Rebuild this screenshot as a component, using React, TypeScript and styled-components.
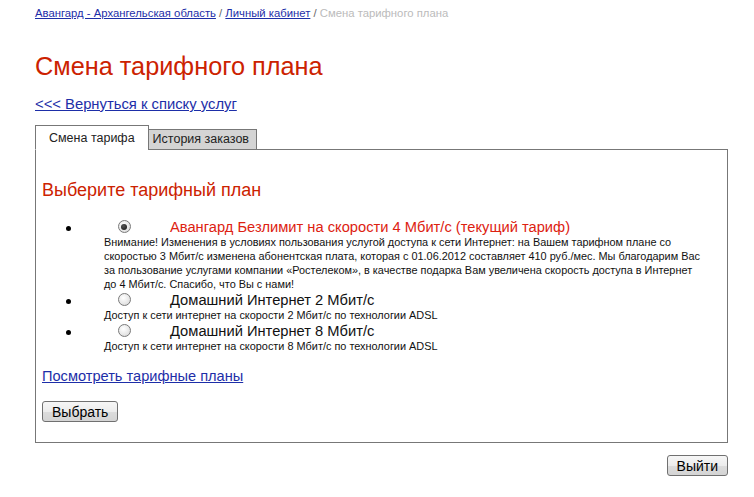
import React, { useState } from "react";
import styled, { createGlobalStyle } from "styled-components";

const GlobalStyle = createGlobalStyle`
  html, body {
    margin: 0;
    padding: 0;
    background: #ffffff;
  }
  body {
    font-family: "Liberation Sans", Arial, sans-serif;
    color: #000;
  }
`;

const Page = styled.div`
  padding: 6px 26px 0 35px;
`;

const Breadcrumbs = styled.div`
  font-size: 11.3px;
  line-height: 14px;
  color: #bbbbbb;
`;

const CrumbLink = styled.a`
  color: #1d2ea8;
  text-decoration: underline;
`;

const Sep = styled.span`
  color: #666;
`;

const Title = styled.h1`
  margin: 31px 0 0;
  font-size: 25.3px;
  line-height: 30px;
  font-weight: normal;
  color: #cc2200;
`;

const BackLink = styled.a`
  display: inline-block;
  margin-top: 15px;
  font-size: 14.8px;
  line-height: 17px;
  color: #1d2ea8;
  text-decoration: underline;
`;

const TabBar = styled.div`
  display: flex;
  align-items: flex-end;
  margin-top: 12px;
  position: relative;
  z-index: 1;
`;

const Tab = styled.div<{ active?: boolean }>`
  box-sizing: border-box;
  font-size: 12.5px;
  border: 1px solid #777;
  border-bottom: ${(p) => (p.active ? "1px solid #fff" : "1px solid #777")};
  background: ${(p) => (p.active ? "#fff" : "#d4d4d4")};
  height: ${(p) => (p.active ? "25px" : "21px")};
  line-height: ${(p) => (p.active ? "25px" : "19px")};
  padding: ${(p) => (p.active ? "0 13px" : "0 7px 0 4px")};
  margin-left: ${(p) => (p.active ? "0" : "-1px")};
  color: #222;
  cursor: pointer;
`;

const Panel = styled.div`
  border: 1px solid #777;
  margin-top: -1px;
  padding: 0 6px;
  height: 294px;
  box-sizing: border-box;
`;

const PanelTitle = styled.h2`
  margin: 29px 0 0;
  font-size: 18px;
  line-height: 22px;
  font-weight: normal;
  color: #cc2200;
`;

const PlanList = styled.ul`
  margin: 17px 0 0;
  padding-left: 40px;
`;

const PlanItem = styled.li`
  list-style: disc;
`;

const PlanRow = styled.label`
  display: flex;
  align-items: center;
  height: 17px;
  cursor: pointer;
`;

const RadioCell = styled.span`
  width: 84px;
  display: flex;
  justify-content: center;
`;

const Radio = styled.input`
  appearance: none;
  margin: 0;
  width: 13px;
  height: 13px;
  border-radius: 50%;
  border: 1px solid #7a7a7a;
  background: radial-gradient(circle at 40% 35%, #ffffff 0%, #e6e6e6 60%, #cfcfcf 100%);
  box-sizing: border-box;
  position: relative;
  cursor: pointer;
  &:checked::after {
    content: "";
    position: absolute;
    left: 2.5px;
    top: 2.5px;
    width: 6px;
    height: 6px;
    border-radius: 50%;
    background: radial-gradient(circle at 40% 35%, #555 0%, #111 100%);
  }
`;

const PlanName = styled.span<{ current?: boolean }>`
  font-size: 14.7px;
  color: ${(p) => (p.current ? "#dd2211" : "#111")};
  white-space: nowrap;
  margin-left: 4px;
`;

const PlanDesc = styled.div`
  margin-left: 22px;
  font-size: 10.9px;
  line-height: 14px;
  color: #111;
  padding-right: 15.5px;
`;

const PlansLink = styled.a`
  display: inline-block;
  margin-top: 15px;
  font-size: 14.6px;
  line-height: 17px;
  color: #1d2ea8;
  text-decoration: underline;
`;

const Button = styled.button`
  font-family: "Liberation Sans", Arial, sans-serif;
  font-size: 14px;
  height: 21px;
  padding: 0 9px;
  color: #000;
  border: 1px solid #707070;
  border-radius: 3px;
  background: linear-gradient(#f6f6f6 0%, #ececec 50%, #dcdcdc 51%, #d4d4d4 100%);
  cursor: pointer;
`;

const ChooseRow = styled.div`
  margin-top: 16px;
`;

const Footer = styled.div`
  display: flex;
  justify-content: flex-end;
  margin-top: 12px;
`;

const plans = [
  {
    id: "4m",
    name: "Авангард Безлимит на скорости 4 Мбит/с (текущий тариф)",
    current: true,
    desc:
      "Внимание! Изменения в условиях пользования услугой доступа к сети Интернет: на Вашем тарифном плане со скоростью 3 Мбит/с изменена абонентская плата, которая с 01.06.2012 составляет 410 руб./мес. Мы благодарим Вас за пользование услугами компании «Ростелеком», в качестве подарка Вам увеличена скорость доступа в Интернет до 4 Мбит/с. Спасибо, что Вы с нами!",
  },
  {
    id: "2m",
    name: "Домашний Интернет 2 Мбит/с",
    desc: "Доступ к сети интернет на скорости 2 Мбит/с по технологии ADSL",
  },
  {
    id: "8m",
    name: "Домашний Интернет 8 Мбит/с",
    desc: "Доступ к сети интернет на скорости 8 Мбит/с по технологии ADSL",
  },
];

export default function App() {
  const [selected, setSelected] = useState("4m");
  const [tab, setTab] = useState(0);

  return (
    <Page>
      <GlobalStyle />
      <Breadcrumbs>
        <CrumbLink href="#">Авангард - Архангельская область</CrumbLink>{" "}
        <Sep>/</Sep> <CrumbLink href="#">Личный кабинет</CrumbLink> <Sep>/</Sep>{" "}
        Смена тарифного плана
      </Breadcrumbs>
      <Title>Смена тарифного плана</Title>
      <BackLink href="#">&lt;&lt;&lt; Вернуться к списку услуг</BackLink>

      <TabBar>
        <Tab active={tab === 0} onClick={() => setTab(0)}>
          Смена тарифа
        </Tab>
        <Tab active={tab === 1} onClick={() => setTab(1)}>
          История заказов
        </Tab>
      </TabBar>
      <Panel>
        <PanelTitle>Выберите тарифный план</PanelTitle>
        <PlanList>
          {plans.map((p) => (
            <PlanItem key={p.id}>
              <PlanRow>
                <RadioCell>
                  <Radio
                    type="radio"
                    name="plan"
                    checked={selected === p.id}
                    onChange={() => setSelected(p.id)}
                  />
                </RadioCell>
                <PlanName current={p.current}>{p.name}</PlanName>
              </PlanRow>
              <PlanDesc>{p.desc}</PlanDesc>
            </PlanItem>
          ))}
        </PlanList>
        <PlansLink href="#">Посмотреть тарифные планы</PlansLink>
        <ChooseRow>
          <Button>Выбрать</Button>
        </ChooseRow>
      </Panel>
      <Footer>
        <Button>Выйти</Button>
      </Footer>
    </Page>
  );
}
